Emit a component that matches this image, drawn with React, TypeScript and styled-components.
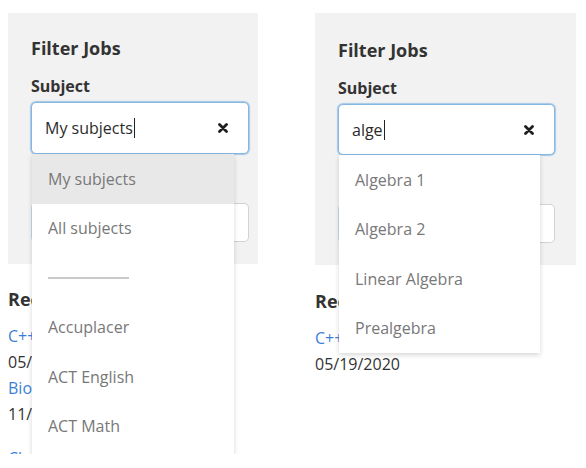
import styled, { createGlobalStyle } from 'styled-components'

const GlobalStyle = createGlobalStyle`
  html, body {
    margin: 0;
    padding: 0;
    background: #ffffff;
    font-family: 'Open Sans', 'Liberation Sans', sans-serif;
    color: #333333;
  }
`

type Option = { label: string; divider?: boolean; active?: boolean }

const leftOptions: Option[] = [
  { label: 'My subjects', active: true },
  { label: 'All subjects' },
  { label: '', divider: true },
  { label: 'Accuplacer' },
  { label: 'ACT English' },
  { label: 'ACT Math' },
  { label: 'ACT Reading' },
]

const rightOptions: Option[] = [
  { label: 'Algebra 1' },
  { label: 'Algebra 2' },
  { label: 'Linear Algebra' },
  { label: 'Prealgebra' },
]

const Page = styled.div`
  display: grid;
  grid-template-columns: 250px 261px;
  column-gap: 57px;
  align-items: start;
  padding: 13px 0 0 8px;
`

const Column = styled.div<{ $clip?: number; $shift?: number }>`
  position: relative;
  padding-top: ${(p) => p.$shift ?? 0}px;
  ${(p) => (p.$clip ? `height: ${p.$clip}px; overflow: hidden;` : '')}
`

const Panel = styled.section<{ $padRight: number; $padTop: number }>`
  background: #f2f2f2;
  padding: ${(p) => p.$padTop}px ${(p) => p.$padRight}px 22px 23px;
  display: flex;
  flex-direction: column;
`

const Title = styled.h2`
  margin: 0;
  font-size: 18px;
  line-height: 24px;
  font-weight: 700;
  color: #333333;
`

const Label = styled.div`
  margin-top: 15px;
  font-size: 16px;
  line-height: 22px;
  font-weight: 700;
  color: #333333;
`

const Field = styled.div<{ $height: number }>`
  position: relative;
  margin-top: 5px;
  height: ${(p) => p.$height}px;
  box-sizing: border-box;
  border: 1px solid #86b7e3;
  box-shadow: 0 0 1px 1px rgba(134, 183, 227, 0.7);
  border-radius: 5px;
  background: #ffffff;
  display: flex;
  align-items: center;
  padding: 0 20px 0 13px;
  z-index: 2;
`

const Typed = styled.span`
  font-size: 16px;
  color: #2b2b2b;
  display: flex;
  align-items: center;
  flex: 1;
`

const Caret = styled.span`
  display: inline-block;
  width: 1px;
  height: 20px;
  background: #222222;
  margin-left: 1px;
`

const Clear = styled.svg`
  width: 10px;
  height: 10px;
  flex: none;
`

const SecondField = styled.div`
  margin-top: 49px;
  height: 39px;
  box-sizing: border-box;
  border: 1px solid #d2d2d2;
  border-left-color: #c3d7ee;
  border-radius: 5px;
  background: #ffffff;
`

const Menu = styled.ul`
  position: absolute;
  top: 100%;
  left: 0;
  width: calc(100% - 14px);
  margin: 1px 0 0;
  padding: 0;
  list-style: none;
  background: #ffffff;
  box-shadow: 0 2px 5px rgba(0, 0, 0, 0.16);
`

const Item = styled.li<{ $active?: boolean }>`
  height: 49.5px;
  display: flex;
  align-items: center;
  padding-left: 16px;
  font-size: 16px;
  color: #787878;
  background: ${(p) => (p.$active ? '#e9e8e8' : '#ffffff')};
`

const Divider = styled.span`
  display: block;
  width: 81px;
  height: 2px;
  background: #c9c9c9;
`

const Recent = styled.div`
  padding-top: 23px;
`

const JobLink = styled.a<{ $gap?: number }>`
  display: block;
  margin-top: ${(p) => p.$gap ?? 0}px;
  font-size: 16px;
  line-height: 26px;
  color: #3d7fd6;
  text-decoration: none;
  white-space: nowrap;
`

const JobDate = styled.div`
  font-size: 16px;
  line-height: 26px;
  color: #333333;
`

const RecentTitle = styled(Title)`
  margin-bottom: 12px;
`

function ClearIcon() {
  return (
    <Clear viewBox="0 0 10 10">
      <path d="M1.5 1.5 L8.5 8.5 M8.5 1.5 L1.5 8.5" stroke="#1e1e1e" strokeWidth="2.8" strokeLinecap="round" />
    </Clear>
  )
}

function FilterPanel(props: {
  value: string
  options: Option[]
  padRight: number
  padTop: number
  inputHeight: number
}) {
  return (
    <Panel $padRight={props.padRight} $padTop={props.padTop}>
      <Title>Filter Jobs</Title>
      <Label>Subject</Label>
      <Field $height={props.inputHeight}>
        <Typed>
          {props.value}
          <Caret />
        </Typed>
        <ClearIcon />
        <Menu>
          {props.options.map((o, i) => (
            <Item key={i} $active={o.active}>
              {o.divider ? <Divider /> : o.label}
            </Item>
          ))}
        </Menu>
      </Field>
      <SecondField />
    </Panel>
  )
}

export default function App() {
  return (
    <>
      <GlobalStyle />
      <Page>
        <Column $clip={441}>
          <FilterPanel value="My subjects" options={leftOptions} padRight={9} padTop={23} inputHeight={52} />
          <Recent>
            <RecentTitle>Recent Jobs</RecentTitle>
            <JobLink>C++ Programming</JobLink>
            <JobDate>05/19/2020</JobDate>
            <JobLink>Biology</JobLink>
            <JobDate>11/04/2019</JobDate>
            <JobLink $gap={18}>Chemistry</JobLink>
          </Recent>
        </Column>
        <Column>
          <FilterPanel value="alge" options={rightOptions} padRight={21} padTop={25} inputHeight={51} />
          <Recent style={{ paddingTop: 24 }}>
            <RecentTitle>Recent Jobs</RecentTitle>
            <JobLink>C++ Programming</JobLink>
            <JobDate>05/19/2020</JobDate>
          </Recent>
        </Column>
      </Page>
    </>
  )
}
